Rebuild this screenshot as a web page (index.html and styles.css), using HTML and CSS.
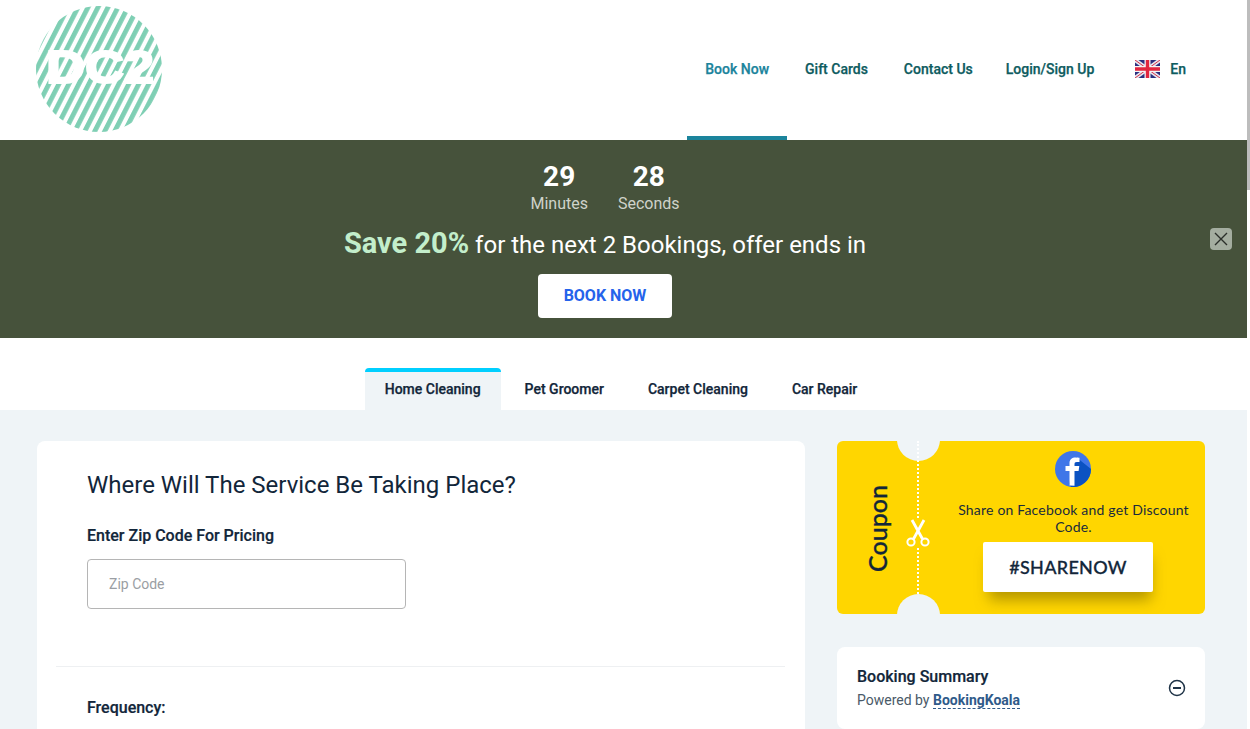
FILE: index.html
```html
<!DOCTYPE html>
<html lang="en">
<head>
    <meta charset="UTF-8">
    <meta name="viewport" content="width=device-width, initial-scale=1.0">
    <title>Book Now</title>
    <link rel="stylesheet" href="styles.css">
</head>
<body>
    <div class="page">
        <header class="site-header">
            <a class="logo" href="#">
                <svg width="128" height="128" viewBox="0 0 128 128">
                    <defs>
                        <pattern id="stripes" width="8.9" height="11" patternUnits="userSpaceOnUse" patternTransform="rotate(27)">
                            <rect width="4.8" height="11" fill="#7fcfb4"/>
                        </pattern>
                    </defs>
                    <circle cx="63" cy="63" r="63" fill="url(#stripes)"/>
                    <text class="logo-text" x="64" y="77" text-anchor="middle" textLength="108" lengthAdjust="spacingAndGlyphs">DC2</text>
                </svg>
            </a>
            <nav class="main-nav">
                <a class="nav-link active" href="#">Book Now</a>
                <a class="nav-link" href="#">Gift Cards</a>
                <a class="nav-link" href="#">Contact Us</a>
                <a class="nav-link login" href="#">Login/Sign Up</a>
                <a class="nav-link lang" href="#">
                    <svg class="flag" width="25" height="18" viewBox="0 0 25 18">
                        <rect width="25" height="18" rx="2" fill="#2b2f7f"/>
                        <path d="M0 0L25 18M25 0L0 18" stroke="#e6e6ee" stroke-width="4"/>
                        <path d="M0 0L25 18M25 0L0 18" stroke="#d8324a" stroke-width="1"/>
                        <path d="M12.5 0V18M0 9H25" stroke="#f4f4f6" stroke-width="6"/>
                        <path d="M12.5 0V18M0 9H25" stroke="#e2263f" stroke-width="3.4"/>
                    </svg>
                    En
                </a>
            </nav>
        </header>

        <section class="promo">
            <div class="countdown">
                <div class="count-unit"><strong>29</strong><span>Minutes</span></div>
                <div class="count-unit"><strong>28</strong><span>Seconds</span></div>
            </div>
            <p class="promo-text"><b>Save 20%</b> for the next 2 Bookings, offer ends in</p>
            <a class="promo-btn" href="#">BOOK NOW</a>
            <button class="promo-close" aria-label="Close">
                <svg width="14" height="14" viewBox="0 0 14 14"><path d="M1 1L13 13M13 1L1 13" stroke="#2b2f2a" stroke-width="1.4" fill="none"/></svg>
            </button>
        </section>

        <div class="tabs">
            <a class="tab active" href="#">Home Cleaning</a>
            <a class="tab" href="#">Pet Groomer</a>
            <a class="tab" href="#">Carpet Cleaning</a>
            <a class="tab" href="#">Car Repair</a>
        </div>

        <main class="content">
            <div class="form-card">
                <div class="form-section zip-section">
                    <h2>Where Will The Service Be Taking Place?</h2>
                    <label for="zip">Enter Zip Code For Pricing</label>
                    <input type="text" id="zip" placeholder="Zip Code">
                </div>
                <div class="form-section">
                    <label>Frequency:</label>
                </div>
            </div>

            <aside class="sidebar">
                <div class="coupon">
                    <div class="coupon-stub">
                        <span class="coupon-title">Coupon</span>
                        <svg class="scissors" width="24" height="28" viewBox="0 0 24 28">
                            <g fill="none" stroke="#fff" stroke-width="2">
                                <circle cx="5" cy="23" r="3.6"/>
                                <circle cx="19" cy="23" r="3.6"/>
                                <path d="M7.5 20L18 1M16.500 20L6 1" stroke-width="2.8"/>
                            </g>
                        </svg>
                    </div>
                    <div class="coupon-body">
                        <svg class="fb-icon" width="36" height="36" viewBox="0 0 36 36">
                            <circle cx="18" cy="18" r="18" fill="#3f76e8"/>
                            <path d="M21 6L36 18A18 18 0 0 1 16 36L14 33Z" fill="#0b52c2"/>
                            <path d="M14.500 34.500V20H10.500V15H14.500V12C14.500 8.500 17 6.500 20.500 6.500C22.200 6.500 23.700 6.600 24.500 6.700V11H21.800C20 11 19.500 11.900 19.500 13.200V15H24.300L23.600 20H19.500V34.800Z" fill="#fff"/>
                        </svg>
                        <p>Share on Facebook and get Discount Code.</p>
                        <a class="share-btn" href="#">#SHARENOW</a>
                    </div>
                </div>

                <div class="summary-card">
                    <div>
                        <h3>Booking Summary</h3>
                        <p>Powered by <a href="#">BookingKoala</a></p>
                    </div>
                    <svg class="collapse-icon" width="18" height="18" viewBox="0 0 18 18">
                        <circle cx="9" cy="9" r="7.500" fill="none" stroke="#1f3347" stroke-width="1.500"/>
                        <path d="M5 9H13" stroke="#1f3347" stroke-width="2"/>
                    </svg>
                </div>
            </aside>
        </main>
    </div>
    <div class="scroll-thumb"></div>
</body>
</html>
```

FILE: styles.css
```css
* {
    box-sizing: border-box;
}
html, body {
    height: 729px;
    overflow: hidden;
}
body {
    margin: 0;
    background-color: #fff;
    font-family: Roboto, "Liberation Sans", sans-serif;
    color: #12263a;
}
a {
    text-decoration: none;
    color: inherit;
}
.page {
    width: 1247px;
}
.scroll-thumb {
    position: absolute;
    top: 0;
    right: 0;
    width: 3px;
    height: 190px;
    background-color: #bdbdbd;
}

/* header */
.site-header {
    display: flex;
    justify-content: space-between;
    height: 140px;
    padding: 6px 0 0 36px;
}
.logo {
    display: block;
    height: 128px;
}
.logo-text {
    font-family: "Liberation Sans", sans-serif;
    font-size: 46px;
    font-weight: 700;
    fill: #fff;
    stroke: #fff;
    stroke-width: 2px;
}
.main-nav {
    display: flex;
    margin-top: -6px;
    padding-right: 61px;
}
.nav-link {
    position: relative;
    display: flex;
    align-items: center;
    gap: 10px;
    height: 140px;
    padding: 0 18px 2px;
    font-size: 14px;
    font-weight: 500;
    color: #0e5c5f;
    -webkit-text-stroke: 0.25px;
}
.nav-link.active {
    color: #1b849c;
}
.nav-link.active::after {
    content: "";
    position: absolute;
    left: 0;
    right: 0;
    bottom: 0;
    height: 4px;
    background-color: #1b849c;
}
.nav-link.login {
    padding-left: 15px;
    padding-right: 23px;
}
.nav-link.lang {
    padding-right: 0;
}

/* promo band */
.promo {
    position: relative;
    display: flex;
    flex-direction: column;
    align-items: center;
    height: 198px;
    padding: 21px 37px 0 0;
    background-color: #46523b;
    color: #fff;
}
.countdown {
    display: flex;
    gap: 30px;
}
.count-unit {
    display: flex;
    flex-direction: column;
    align-items: center;
}
.count-unit strong {
    font-size: 28px;
    line-height: 32px;
}
.count-unit span {
    margin-top: 1px;
    font-size: 16px;
    line-height: 20px;
    color: #cfd3ca;
}
.promo-text {
    margin: 11px 0 0;
    font-size: 24px;
    line-height: 36px;
}
.promo-text b {
    font-size: 29px;
    color: #c3eecb;
}
.promo-btn {
    margin-top: 11px;
    width: 134px;
    height: 44px;
    line-height: 44px;
    text-align: center;
    background-color: #fff;
    border-radius: 4px;
    font-size: 16px;
    font-weight: 700;
    color: #2563eb;
}
.promo-close {
    position: absolute;
    top: 88px;
    right: 15px;
    display: flex;
    align-items: center;
    justify-content: center;
    width: 22px;
    height: 22px;
    padding: 0;
    border: none;
    border-radius: 4px;
    background-color: #a4ada0;
}

/* tabs */
.tabs {
    display: flex;
    justify-content: center;
    gap: 4px;
    height: 72px;
    padding: 30px 5px 0 0;
}
.tab {
    padding: 0 20px;
    font-size: 14px;
    font-weight: 500;
    line-height: 34px;
    border-top: 4px solid transparent;
    -webkit-text-stroke: 0.25px;
}
.tab.active {
    background-color: #eff4f7;
    border-top-color: #00cfff;
    border-radius: 4px 4px 0 0;
}

/* main */
.content {
    display: flex;
    align-items: flex-start;
    gap: 32px;
    height: 319px;
    padding: 31px 42px 0 37px;
    background-color: #eff4f7;
    overflow: hidden;
}
.form-card {
    width: 768px;
    padding: 0 20px 0 19px;
    height: 400px;
    background-color: #fff;
    border-radius: 8px;
}
.form-section {
    padding: 0 31px;
}
.zip-section {
    padding-top: 27px;
    padding-bottom: 57px;
    border-bottom: 1px solid #eef0f2;
}
.form-section h2 {
    margin: 0 0 24px;
    font-size: 24px;
    font-weight: 400;
    line-height: 34px;
}
.form-section label {
    display: block;
    font-size: 16px;
    font-weight: 500;
    line-height: 20px;
    -webkit-text-stroke: 0.2px;
}
.form-section input {
    display: block;
    width: 319px;
    height: 50px;
    margin-top: 13px;
    padding: 0 21px;
    border: 1px solid #b5b5b5;
    border-radius: 4px;
    font-family: inherit;
    font-size: 14px;
}
.form-section input::placeholder {
    color: #9a9ea3;
}
.form-section:last-child {
    padding-top: 31px;
}

/* sidebar */
.sidebar {
    width: 368px;
    display: flex;
    flex-direction: column;
    gap: 33px;
}
.coupon {
    position: relative;
    display: flex;
    height: 173px;
    background-color: #ffd600;
    border-radius: 6px;
    overflow: hidden;
}
.coupon::before, .coupon::after {
    content: "";
    position: absolute;
    left: 60px;
    width: 43px;
    height: 43px;
    border-radius: 50%;
    background-color: #eff4f7;
}
.coupon::before {
    top: -23px;
}
.coupon::after {
    bottom: -23px;
}
.coupon-stub {
    position: relative;
    width: 82px;
    flex: none;
    display: flex;
    align-items: center;
    padding-left: 26px;
    border-right: 2px dotted #fff;
}
.coupon-title {
    margin-top: 2px;
    writing-mode: vertical-rl;
    transform: rotate(180deg);
    font-family: Lato, sans-serif;
    font-size: 25px;
    font-weight: 500;
    line-height: 28px;
    color: #12263a;
    -webkit-text-stroke: 0.3px;
}
.scissors {
    position: absolute;
    right: -13px;
    top: 78px;
    background-color: #ffd600;
}
.coupon-body {
    flex: 1;
    display: flex;
    flex-direction: column;
    align-items: center;
    padding: 10px 14px 0 37px;
    text-align: center;
}
.fb-icon {
    margin-right: 2px;
}
.coupon-body p {
    margin: 14px 0 0;
    font-family: Lato, sans-serif;
    font-size: 14px;
    letter-spacing: 0.2px;
    line-height: 17px;
    color: #1a2b3c;
}
.share-btn {
    width: 170px;
    height: 50px;
    margin: 7px 11px 0 0;
    line-height: 50px;
    text-align: center;
    background-color: #fff;
    border-radius: 2px;
    font-family: Lato, sans-serif;
    font-size: 18px;
    font-weight: 500;
    letter-spacing: 0.3px;
    color: #12263a;
    -webkit-text-stroke: 0.3px;
    box-shadow: 2px 12px 14px -4px rgba(120, 100, 0, 0.55);
}
.summary-card {
    display: flex;
    justify-content: space-between;
    align-items: center;
    height: 82px;
    padding: 0 19px 0 20px;
    background-color: #fff;
    border-radius: 8px;
}
.summary-card h3 {
    margin: -1px 0 0;
    font-size: 16px;
    font-weight: 500;
    line-height: 20px;
    -webkit-text-stroke: 0.2px;
}
.summary-card p {
    margin: 4px 0 0;
    font-size: 14px;
    line-height: 18px;
    color: #4a5a68;
}
.summary-card a {
    font-weight: 700;
    color: #2f5a8a;
    border-bottom: 1px dashed #2f5a8a;
}
```
